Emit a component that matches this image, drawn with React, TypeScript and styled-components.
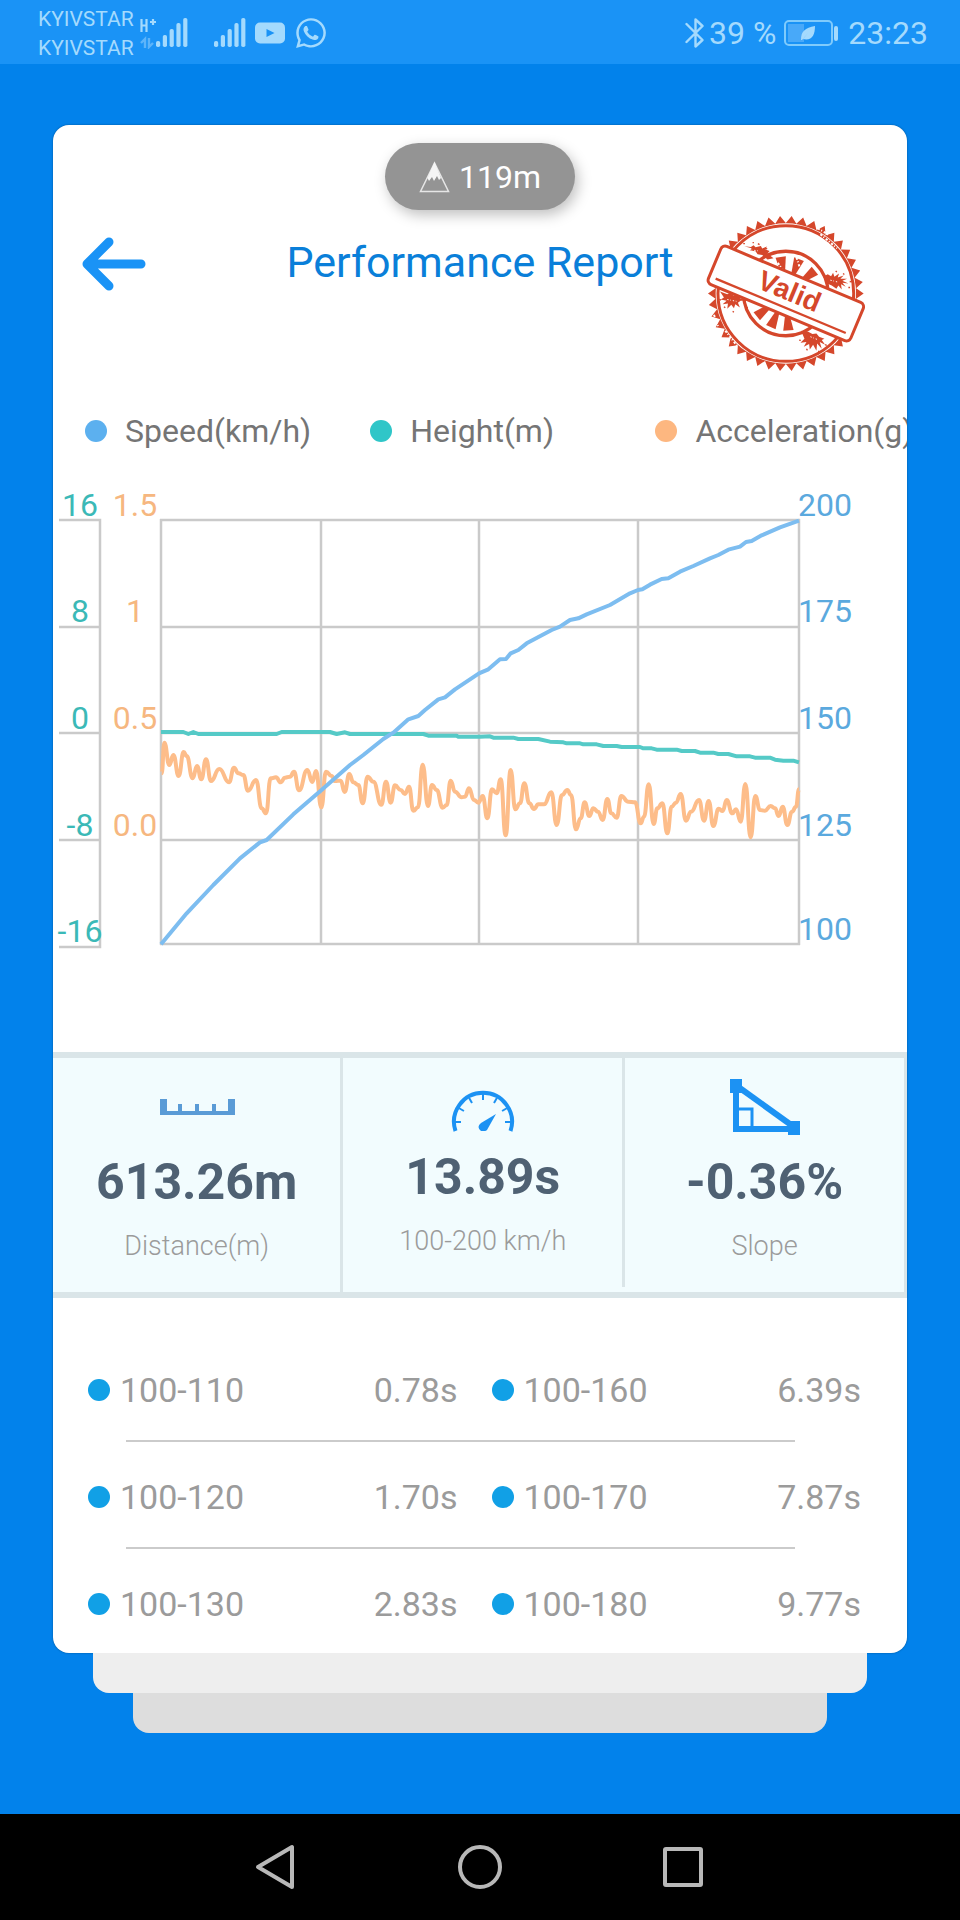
import React from "react";
import styled, { createGlobalStyle } from "styled-components";
import { FaWhatsapp } from "react-icons/fa";

type Point = [number, number];

const COLORS = {
  speed: "#5cb0ef",
  height: "#2fc6c8",
  accel: "#fdb780",
  grid: "#cacaca",
  status: "#a4dafd",
  stamp: "#d5472b",
};

const LEGEND = [
  { label: "Speed(km/h)", color: COLORS.speed },
  { label: "Height(m)", color: COLORS.height },
  { label: "Acceleration(g)", color: COLORS.accel },
];

const SPLITS = [
  [["100-110", "0.78s"], ["100-160", "6.39s"]],
  [["100-120", "1.70s"], ["100-170", "7.87s"]],
  [["100-130", "2.83s"], ["100-180", "9.77s"]],
];

/* ---------- chart data ---------- */

// samples are kept at three units per pixel of the chart
const UNIT = 3;

const parse = (s: string, dx = 0, dy = 0): Point[] =>
  s.trim().split(/\s+/).map(p => {
    const [x, y] = p.split(",").map(Number);
    return [(x + dx) / UNIT, (y + dy) / UNIT];
  });

const SPEED = [
  ...parse(`333,1393 410,1300 490,1215 570,1135 630,1087 650,1080 730,1003 812,932 900,855 940,825
    1000,777 1030,758 1075,718 1105,708 1125,690 1165,658 1185,652 1215,628 1287,580`, -9),
  ...parse(`25,568 60,538 78,537 92,520 115,510 140,490 215,450 240,440 270,420 295,415 320,403 390,375
    450,340 474,330 487,328 510,314 545,297 565,295 600,275 640,258 690,235 715,225 745,209 780,200
    798,186 815,183 845,166 900,142 957,122`, 1281),
];

const HEIGHT = [
  ...parse(`333,756 400,756 415,762 430,756 445,762 680,762 695,756 840,756 860,762 885,757 900,762
    1120,762 1135,767 1220,767 1225,770 1290,770`, -9),
  ...parse(`30,769 40,773 100,773 115,777 175,777 210,785 250,787 260,790 300,790 310,793 350,793
    370,798 410,798 425,801 480,801 490,805 515,805 530,809 590,809 605,813 645,813 660,818 700,818
    715,822 745,822 770,829 810,829 825,833 870,833 885,839 910,842 940,842 957,847`, 1281),
];

const ACCEL = [
  ...parse(`35,160 43,68 58,135 70,105 86,168 101,96 110,108 128,175 141,138 154,178 168,118 183,183
    208,147 237,187 252,143 265,160 280,165 294,212 318,180 335,265 348,280 362,175 378,172 392,187
    405,173 420,170 432,155 447,211 472,150 487,186 498,153 514,262 528,155 545,168 555,183 572,182
    584,216 598,162 610,187 625,195 638,250 653,170 670,185 694,254 708,185 722,248 735,196 752,210
    765,222 777,200 790,272 804,262 818,134 834,258 846,195 860,210 878,263 890,255 902,182 915,215
    935,232 945,230 957,205 972,240 985,248`, 291, 720),
  ...parse(`8,168 22,235 36,148 50,160 62,118 77,286 92,90 106,208 120,190 133,130 148,190 162,207
    175,193 192,193 214,157 230,255 246,165 262,150 273,165 288,268 302,235 314,187 328,228 340,205
    354,215 368,240 382,177 394,220 410,233 424,168 445,185 465,187 482,250 492,230 506,133 521,252
    532,205 547,190 562,280 575,200 588,188 602,162 618,242 633,215 657,180 672,242 686,183 700,258
    716,206 728,213 740,180 757,220 768,208 782,245 796,132 812,292 826,168 840,210 855,212 872,198
    885,205 896,228 908,200 922,255 936,215 948,200 957,148`, 1281, 780),
];

const linePath = (pts: Point[]) => "M" + pts.map(p => p.join(" ")).join("L");

const smoothPath = (pts: Point[]) =>
  pts.slice(1).reduce((d, [x, y], i) => {
    const [px, py] = pts[i];
    const mid = (px + x) / 2;
    return `${d}C${mid} ${py} ${mid} ${y} ${x} ${y}`;
  }, `M${pts[0].join(" ")}`);

const GRID_X = [108, 268, 426, 585, 746];
const GRID_Y = [40, 147, 253, 360, 464];
const LEFT_LABEL_Y = [36, 142, 249, 356, 462];
const RIGHT_LABEL_Y = [36, 142, 249, 356, 460];

/* ---------- drawings ---------- */

function Signal() {
  return (
    <svg width="32" height="30" viewBox="0 0 32 30" fill={COLORS.status} aria-hidden>
      {[6, 12, 18, 24, 29].map((h, i) => (
        <rect key={h} x={i * 6.8} y={29 - h} width="4.2" height={h} rx="1.8" />
      ))}
    </svg>
  );
}

function NetworkType() {
  return (
    <svg width="16" height="32" viewBox="0 0 16 32" fill="none" aria-hidden>
      <path d="M1.5 2v13M6.5 2v13M1.5 8.500h5M10 5h6M13 2v6" stroke={COLORS.status} strokeWidth="2.200" />
      <path d="M5 31V22L1 26M9 21v9l4-4" stroke="#5db4fa" strokeWidth="2.400" />
    </svg>
  );
}

function YouTube() {
  return (
    <svg width="30" height="22" viewBox="0 0 30 22" aria-hidden>
      <rect width="30" height="21" y=".5" rx="5" fill={COLORS.status} />
      <path d="M11.500 7v8l8-4z" fill="#1a93f6" />
    </svg>
  );
}

function Bluetooth() {
  return (
    <svg width="20" height="32" viewBox="0 0 20 32" fill="none" stroke={COLORS.status} strokeWidth="2.400" strokeLinejoin="round" strokeLinecap="round" aria-hidden>
      <path d="M1.500 7l16 16L10.500 29.500V2.500L17.500 9 1.500 25" />
    </svg>
  );
}

function Battery() {
  return (
    <svg width="56" height="28" viewBox="0 0 56 28" aria-hidden>
      <rect x="1" y="2" width="47" height="24" rx="4" fill="none" stroke="#7fcbfc" strokeWidth="2" />
      <rect x="4" y="5" width="16" height="18" fill="#48a9f9" />
      <rect x="50" y="7" width="4" height="15" rx="2" fill={COLORS.status} />
      <path d="M17 21c0-9 4-12 14-14 0 9-3 15-12 13l5-6-6 7z" fill={COLORS.status} />
    </svg>
  );
}

function Mountain() {
  return (
    <svg width="31" height="32" viewBox="0 0 31 32" aria-hidden>
      <path d="M15.500 2L1.500 30.500h28z" fill="none" stroke="#e6e6e6" strokeWidth="1.500" />
      <path d="M15.500 1L8.500 17l1.500 3 3-4 2 4 3-5 2 4 2-2z" fill="#f5f5f5" />
    </svg>
  );
}

function BackArrow() {
  return (
    <svg width="64" height="54" viewBox="0 0 64 54" fill="none" stroke="#1a93f6" strokeWidth="9" strokeLinecap="round" strokeLinejoin="round" aria-hidden>
      <path d="M59 27H6M27 5L5 27l22 22" />
    </svg>
  );
}

const polar = (deg: number, r: number) => {
  const a = (deg * Math.PI) / 180;
  return `${Math.cos(a) * r} ${-Math.sin(a) * r}`;
};

// serrated outline of the stamp
const TEETH = Array.from({ length: 84 }, (_, i) => polar((i * 360) / 84, i % 2 ? 212 : 234)).join(" ");

const wedge = (deg: number) =>
  `M${polar(deg - 5, 55)}L${polar(deg - 8, 112)}L${polar(deg + 8, 112)}L${polar(deg + 5, 55)}z`;

const SPLASHES = [
  "M-125-142l20 2 8-5 6 6 16-4 4 8 14-6-4 9 12 4-6 8 18 14-18 4-16-14-14-2-6-9-16-2 4-7z",
  "M112-50l14-8 10 6 6-10 4 12 14-10-4 12 18-6-10 10 20 0-14 6 18 8-18-2 10 12-14-8 2 16-10-12-6 10-14-10-14-6z",
  "M-198-6l22 8 8-4 10 8 16 0 4 8 24 8-22 0-8 6 6 14-14-10-4 12-8-10-12 12 2-16-16 2 12-10-18-4 10-6z",
  "M46 112l20 2 14 8 12-2 8 10 16 6-8 4 10 14-16-8 6 20-14-16-2 22-10-18-10 14-2-16-16 8 8-14-18 2 12-12z",
];

const SPECKS = "M-128-150h5M-100-153h4M-84-150l5 3M-62-136l6 2M150-68l3 4M172-60l4 3M192-36l6 1M188-18h5M-200 18l5 2M-186 40l4 3M-160 54l4 2M-120 44l6-2M40 140l5 1M62 166l3 5M98 172l2 5M118 154l5 2";

function Stamp() {
  return (
    <svg width="163" height="162" viewBox="75 35 490 485" role="img" aria-label="Valid stamp">
      <g transform="translate(318 279)" stroke={COLORS.stamp} fill="none">
        <polygon points={TEETH} fill={COLORS.stamp} stroke="none" />
        <circle r="211" fill="#fff" stroke="none" />
        <circle r="204" strokeWidth="9" />
        <circle r="127" strokeWidth="10" />
        {[38, 69, 98, 218, 246, 274].map(a => (
          <path key={a} d={wedge(a)} fill={COLORS.stamp} stroke="none" />
        ))}
        {SPLASHES.map(d => (
          <path key={d} d={d} fill={COLORS.stamp} stroke="none" />
        ))}
        <path d={SPECKS} strokeWidth="4" />
        <path d="M-112-132l30 4M134-40l24 6M-176 18l30 6M74 130l20 8" stroke="#fff" strokeWidth="3" strokeDasharray="4 5 2 6" />
        <path d="M96-196l36 22M104-178l50 42M-216 64l14 40M-182 112l36 46M-24-92l14 20M32-108l10 30" stroke="#fff" strokeWidth="6" strokeDasharray="7 5 3 6" />
        <g transform="rotate(22.700)">
          <rect x="-232" y="-62" width="464" height="124" rx="14" fill="#fff" strokeWidth="9" />
          <path d="M-212 40H212" strokeWidth="7" />
        </g>
      </g>
      <StampText x="326" y="297" transform="rotate(22.700 318 279)">Valid</StampText>
    </svg>
  );
}

function RulerIcon() {
  return (
    <svg width="76" height="60" viewBox="0 0 76 60" fill="#5a9bd6" aria-hidden>
      <path d="M1 22h7v12h11v-7h4v7h13v-7h4v7h13v-7h4v7h12V22h7v16H1z" />
    </svg>
  );
}

function GaugeIcon() {
  return (
    <svg width="76" height="60" viewBox="0 0 76 60" fill="none" stroke="#1c92f3" aria-hidden>
      <path d="M10.500 59a29 29 0 1 1 55 0" strokeWidth="4" />
      <g transform="translate(38 50)">
        {[0, 30, 60, 90, 120, 150, 180].map(a => (
          <path key={a} d={`M${polar(a, 22)}L${polar(a, 28)}`} strokeWidth="2" />
        ))}
      </g>
      <path d="M51 42L42 58Q41 59 40 59H36Q31 55 36 51z" fill="#1c92f3" stroke="none" />
    </svg>
  );
}

function SlopeIcon() {
  return (
    <svg width="76" height="60" viewBox="0 0 76 60" fill="none" stroke="#1c92f3" aria-hidden>
      <path d="M9 10V52H66" strokeWidth="6" />
      <path d="M10 9L67 50" strokeWidth="6" />
      <path d="M9 32H25V52" strokeWidth="3" />
      <path d="M3 2h12v14H3zM61 44h12v14H61z" fill="#1c92f3" stroke="none" />
    </svg>
  );
}

function Chart() {
  return (
    <ChartSvg viewBox="0 0 854 480" role="img" aria-label="Speed, height and acceleration">
      <g stroke={COLORS.grid} strokeWidth="2.500" fill="none">
        <path d="M6 40H47V467H6M6 147H47M6 253H47M6 360H47" />
        {GRID_X.map(x => <path key={x} d={`M${x} 39V465`} />)}
        {GRID_Y.map(y => <path key={y} d={`M107 ${y}H747`} />)}
      </g>
      <Trace d={smoothPath(ACCEL)} stroke="#fdbd8a" />
      <Trace d={linePath(HEIGHT)} stroke="#55cac7" />
      <Trace d={linePath(SPEED)} stroke="#7dbdf0" />
      {["16", "8", "0", "-8", "-16"].map((t, i) => (
        <AxisLabel key={t} x="27" y={LEFT_LABEL_Y[i]} fill="#3bb9b7" textAnchor="middle">{t}</AxisLabel>
      ))}
      {["1.5", "1", "0.5", "0.0"].map((t, i) => (
        <AxisLabel key={t} x="82" y={LEFT_LABEL_Y[i]} fill="#f6b780" textAnchor="middle">{t}</AxisLabel>
      ))}
      {["200", "175", "150", "125", "100"].map((t, i) => (
        <AxisLabel key={t} x="745" y={RIGHT_LABEL_Y[i]} fill="#5ba9de">{t}</AxisLabel>
      ))}
    </ChartSvg>
  );
}

/* ---------- page ---------- */

export default function App() {
  return (
    <>
      <GlobalStyle />
      <Screen>
        <StatusBar>
          <StatusGroup>
            <Carriers>
              <span>KYIVSTAR</span>
              <span>KYIVSTAR</span>
            </Carriers>
            <NetworkType />
            <Signal />
            <SecondSim>
              <Signal />
              <YouTube />
              <FaWhatsapp size={34} />
            </SecondSim>
          </StatusGroup>
          <StatusGroup>
            <Bluetooth />
            <BatteryLevel>39 %</BatteryLevel>
            <Battery />
            <Clock>23:23</Clock>
          </StatusGroup>
        </StatusBar>

        <Main>
          <Card>
            <Altitude>
              <Mountain />
              119m
            </Altitude>
            <Header>
              <BackButton type="button" aria-label="Back">
                <BackArrow />
              </BackButton>
              <Title>Performance Report</Title>
              <StampSlot><Stamp /></StampSlot>
            </Header>

            <Legend>
              {LEGEND.map(item => (
                <LegendItem key={item.label}>
                  <Dot $color={item.color} />
                  {item.label}
                </LegendItem>
              ))}
            </Legend>

            <Chart />

            <Stats>
              <Stat>
                <RulerIcon />
                <StatValue>613.26m</StatValue>
                <StatLabel>Distance(m)</StatLabel>
              </Stat>
              <Stat $raised>
                <GaugeIcon />
                <StatValue>13.89s</StatValue>
                <StatLabel>100-200 km/h</StatLabel>
              </Stat>
              <Stat>
                <SlopeIcon />
                <StatValue>-0.36%</StatValue>
                <StatLabel>Slope</StatLabel>
              </Stat>
            </Stats>

            <SplitList>
              {SPLITS.map(row => (
                <SplitRow key={row[0][0]}>
                  {row.map(([range, time]) => (
                    <Split key={range}>
                      <Dot $color="#11a0e6" />
                      <span>{range}</span>
                      <SplitTime>{time}</SplitTime>
                    </Split>
                  ))}
                </SplitRow>
              ))}
            </SplitList>
          </Card>
          <Sheet $inset={40} $color="#eeeeee" />
          <Sheet $inset={80} $color="#dddddd" />
        </Main>

        <NavBar>
          <NavButton type="button" aria-label="Back">
            <svg width="44" height="48" viewBox="0 0 44 48"><path d="M37 4v40L3 24z" /></svg>
          </NavButton>
          <NavButton type="button" aria-label="Home">
            <svg width="48" height="48" viewBox="0 0 48 48"><circle cx="24" cy="24" r="20" /></svg>
          </NavButton>
          <NavButton type="button" aria-label="Recent apps">
            <svg width="44" height="44" viewBox="0 0 44 44"><rect x="4" y="4" width="36" height="36" rx="1" /></svg>
          </NavButton>
        </NavBar>
      </Screen>
    </>
  );
}

const GlobalStyle = createGlobalStyle`
  * { box-sizing: border-box; }
  body {
    margin: 0;
    background: #0282eb;
    font-family: Roboto, "Liberation Sans", sans-serif;
  }
  svg { display: block; flex: none; }
`;

const Screen = styled.div`
  min-height: 100vh;
  display: flex;
  flex-direction: column;
`;

const StatusBar = styled.header`
  display: flex;
  justify-content: space-between;
  height: 64px;
  padding: 2px 32px 0 38px;
  background: #1a93f6;
  color: ${COLORS.status};
`;

const StatusGroup = styled.div`
  display: flex;
  align-items: center;
`;

const Carriers = styled.div`
  display: flex;
  flex-direction: column;
  padding-top: 2px;
  margin-right: 6px;
  font-size: 21px;
  line-height: 29px;
`;

const SecondSim = styled.div`
  display: flex;
  align-items: center;
  gap: 9px;
  margin-left: 26px;
`;

const StatusText = styled.span`
  font-size: 32px;
  line-height: 40px;
`;

const BatteryLevel = styled(StatusText)`
  margin: 0 8px 0 4px;
`;

const Clock = styled(StatusText)`
  margin-left: 8px;
`;

const Main = styled.main`
  padding: 61px 53px;
`;

const Card = styled.section`
  overflow: hidden;
  padding-top: 18px;
  border-radius: 16px;
  background: #fff;
  box-shadow: 0 0 2px rgba(0, 0, 0, 0.4);
`;

const Altitude = styled.div`
  display: flex;
  align-items: center;
  justify-content: center;
  gap: 9px;
  width: 190px;
  height: 67px;
  margin: 0 auto;
  border-radius: 34px;
  background: #949494;
  box-shadow: 3px 5px 14px rgba(0, 0, 0, 0.25);
  color: #fff;
  font-size: 32px;
`;

const Header = styled.div`
  display: grid;
  grid-template-columns: 1fr auto 1fr;
  align-items: start;
  margin-top: 2px;
  padding: 0 29px;
`;

const BackButton = styled.button`
  justify-self: start;
  margin: 25px 0 0;
  padding: 0;
  border: none;
  background: none;
  cursor: pointer;
`;

const Title = styled.h1`
  margin: 25px 0 0;
  color: #0a7fd9;
  font-size: 43px;
  font-weight: 400;
  line-height: 50px;
`;

const StampSlot = styled.div`
  justify-self: end;
  margin-right: 10px;
`;

const StampText = styled.text`
  font-family: "Liberation Sans", Arial, sans-serif;
  font-size: 84px;
  font-weight: 700;
  text-anchor: middle;
  fill: ${COLORS.stamp};
`;

const Legend = styled.ul`
  display: grid;
  grid-template-columns: repeat(3, 33.4%);
  margin: 38px 0 30px;
  padding: 0;
  list-style: none;
  color: #757575;
  font-size: 32px;
  line-height: 38px;
  white-space: nowrap;
`;

const LegendItem = styled.li`
  display: flex;
  align-items: center;
  gap: 18px;
  padding-left: 32px;
`;

const Dot = styled.span<{ $color: string }>`
  flex: none;
  width: 22px;
  height: 22px;
  border-radius: 50%;
  background: ${p => p.$color};
`;

const ChartSvg = styled.svg`
  width: 100%;
  height: auto;
`;

const Trace = styled.path`
  fill: none;
  stroke-width: 4px;
  stroke-linejoin: round;
`;

const AxisLabel = styled.text`
  font-size: 32px;
`;

const Stats = styled.div`
  display: grid;
  grid-template-columns: 34% 33% 33%;
  margin-top: 92px;
  border: solid #dae5e8;
  border-width: 6px 0;
  background: #f2fcfe;
`;

const Stat = styled.div<{ $raised?: boolean }>`
  display: flex;
  flex-direction: column;
  align-items: center;
  margin-bottom: ${p => (p.$raised ? 5 : 0)}px;
  padding: ${p => (p.$raised ? 14 : 19)}px 0 30px;
  border-right: 3px solid #dae5e8;
`;

const StatValue = styled.strong`
  margin: 15px 0 18px;
  color: #4f6173;
  font-size: 50px;
  line-height: 60px;
`;

const StatLabel = styled.span`
  color: #9b9b9b;
  font-size: 27px;
  font-weight: 300;
  line-height: 32px;
`;

const SplitList = styled.ul`
  margin: 0;
  padding: 37px 0 0;
  list-style: none;
  color: #9b9b9b;
  font-size: 34px;
  line-height: 40px;
`;

const SplitRow = styled.li`
  display: grid;
  grid-template-columns: 1fr 1fr;
  padding: 35px 12px 29px 35px;

  &:not(:last-child)::after {
    content: "";
    grid-column: 1 / -1;
    height: 2px;
    margin: 30px 100px -29px 38px;
    background: #cbcbcb;
  }
`;

const Split = styled.div`
  display: flex;
  align-items: center;
  gap: 10px;
  padding-right: 34px;
`;

const SplitTime = styled.span`
  margin-left: auto;
`;

const Sheet = styled.div<{ $inset: number; $color: string }>`
  height: 40px;
  margin: 0 ${p => p.$inset}px;
  border-radius: 0 0 16px 16px;
  background: ${p => p.$color};
`;

const NavBar = styled.nav`
  display: flex;
  align-items: center;
  justify-content: center;
  gap: 157px;
  height: 106px;
  margin-top: auto;
  background: #000;
`;

const NavButton = styled.button`
  padding: 0;
  border: none;
  background: none;
  cursor: pointer;

  svg {
    fill: none;
    stroke: #b8b8b8;
    stroke-width: 4px;
    stroke-linejoin: round;
  }
`;
